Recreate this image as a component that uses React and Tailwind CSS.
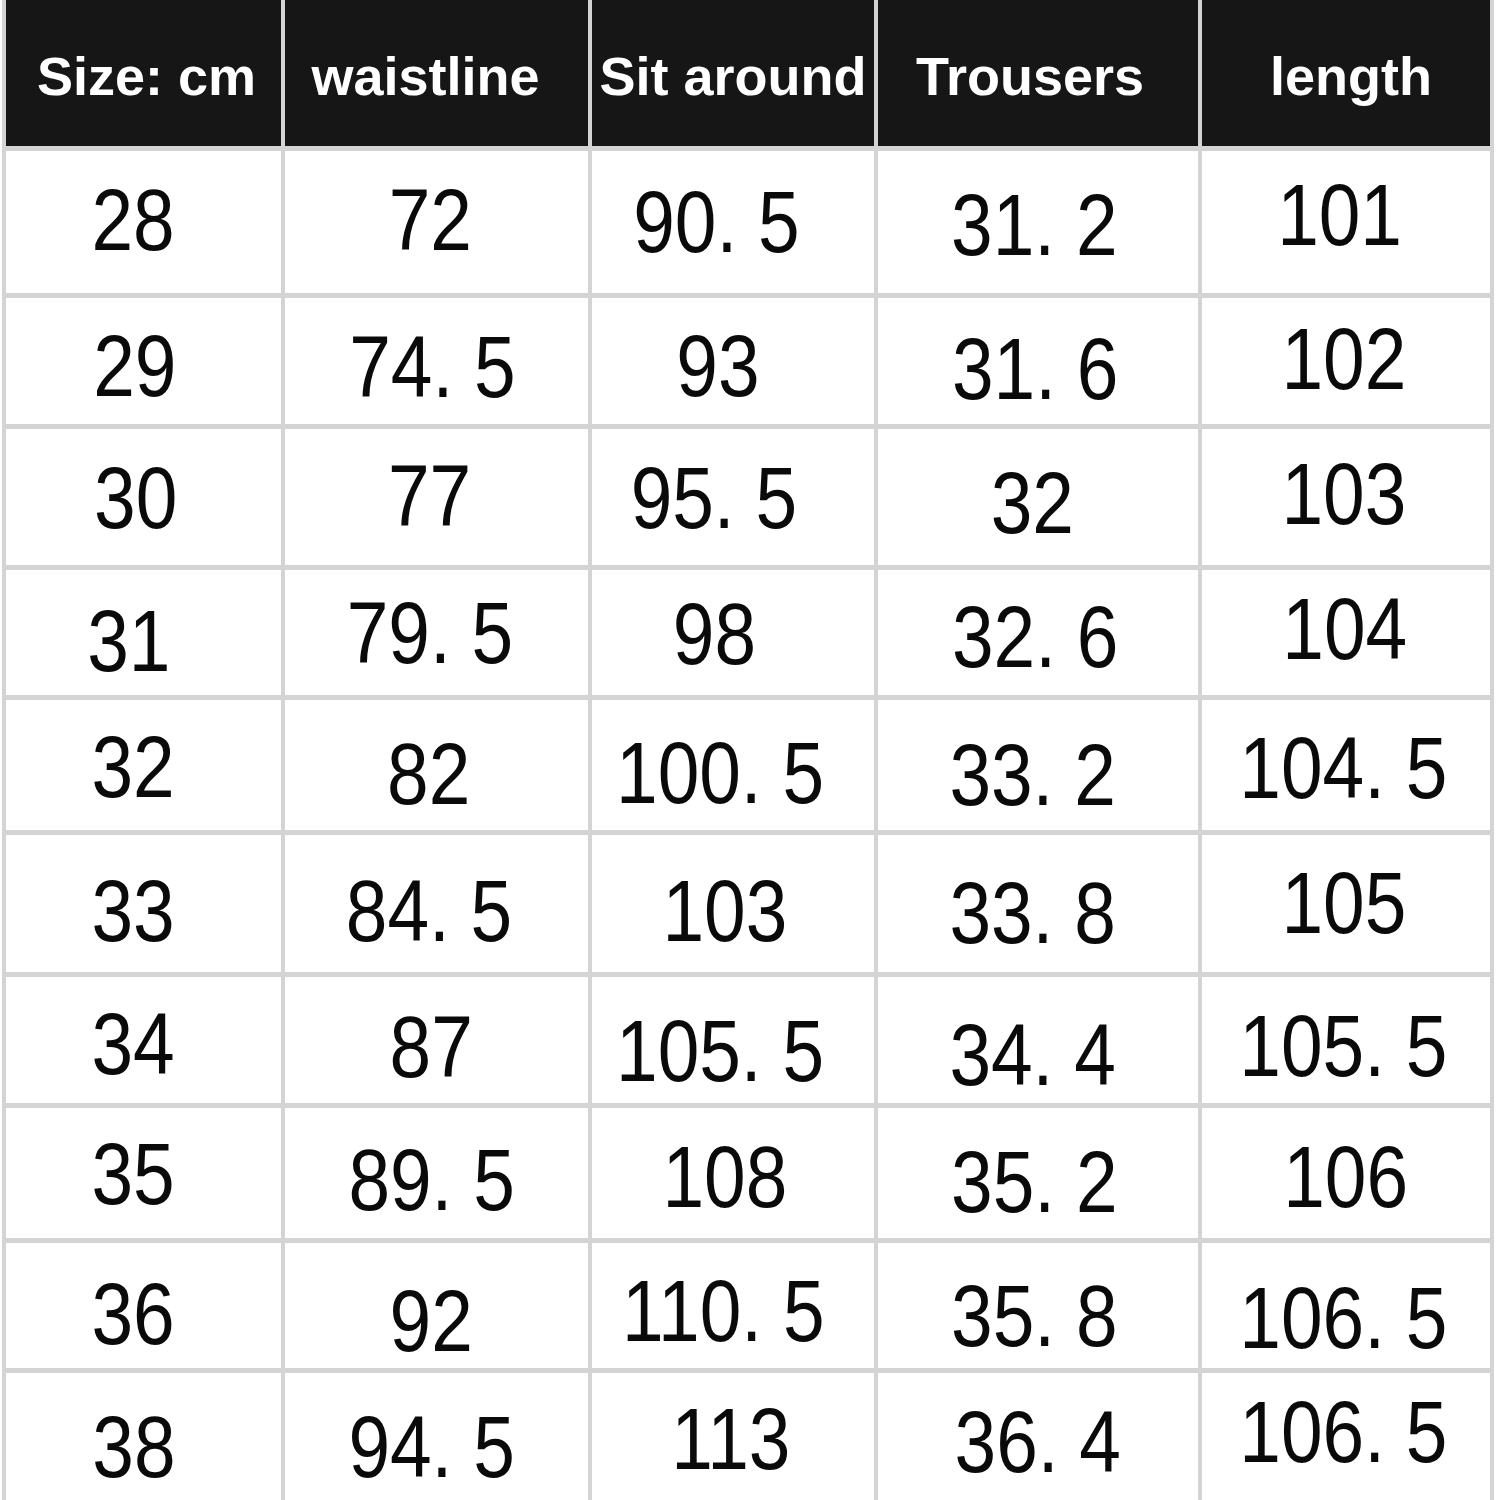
const headers = [
    ['Size: cm', 3],
    ['waistline', -11],
    ['Sit around', 0],
    ['Trousers', -8],
    ['length', 5],
];

// each cell: [text, dx, dy] — small nudges so the numbers sit where the scan has them
const rows = [
    [['28', -12, -3], ['72', -7, -3], ['90. 5', -19, -1], ['31. 2', -4, 2], ['101', -7, -8]],
    [['29', -10, 4], ['74. 5', -5, 5], ['93', -18, 4], ['31. 6', -3, 7], ['102', -2, -3]],
    [['30', -9, 0], ['77', -8, -2], ['95. 5', -22, 0], ['32', -7, 5], ['103', -2, -4]],
    [['31', -17, 8], ['79. 5', -8, 0], ['98', -22, 1], ['32. 6', -3, 4], ['104', -1, -4]],
    [['32', -12, 1], ['82', -9, 8], ['100. 5', -15, 7], ['33. 2', -6, 9], ['104. 5', -3, 2]],
    [['33', -12, 7], ['84. 5', -9, 7], ['103', -9, 7], ['33. 8', -6, 9], ['105', -2, -1]],
    [['34', -12, 3], ['87', -6, 6], ['105. 5', -15, 10], ['34. 4', -6, 14], ['105. 5', -3, 5]],
    [['35', -12, 0], ['89. 5', -6, 6], ['108', -9, 3], ['35. 2', -4, 8], ['106', 0, 3]],
    [['36', -12, 8], ['92', -6, 15], ['110. 5', -11, 5], ['35. 8', -4, 10], ['106. 5', -3, 12]],
    [['38', -11, 10], ['94. 5', -6, 10], ['113', -3, 2], ['36. 4', 0, 5], ['106. 5', -3, -5]],
];

export default function App() {
    return (
        <div className="w-[1500px] h-[1500px] bg-white overflow-hidden">
            <div className="ml-[2px] w-[1492px] h-[1500px] border-x-4 border-[#d4d4d4] bg-[#d4d4d4] grid grid-cols-[275px_303px_282px_320px_288px] grid-rows-[146px_142px_126px_136px_125px_130px_137px_126px_130px_125px_127px] gap-x-[4px] gap-y-[5px]">
                {headers.map(([label, dx]) => (
                    <div
                        key={label}
                        className="bg-[#161616] flex items-center justify-center pt-[6px] text-white font-bold text-[54px] leading-none whitespace-nowrap font-['Liberation_Sans',Arial,sans-serif]"
                    >
                        <span style={{ transform: `translateX(${dx}px)` }}>{label}</span>
                    </div>
                ))}
                {rows.map((row, r) =>
                    row.map(([value, dx, dy], c) => (
                        <div
                            key={`${r}-${c}`}
                            className="bg-white flex items-center justify-center text-[#0a0a0a] text-[87px] leading-none whitespace-pre font-['Liberation_Sans',Arial,sans-serif]"
                        >
                            <span className="inline-block scale-x-[0.86]" style={{ transform: `translate(${dx}px, ${dy}px)` }}>{value}</span>
                        </div>
                    ))
                )}
            </div>
        </div>
    );
}
